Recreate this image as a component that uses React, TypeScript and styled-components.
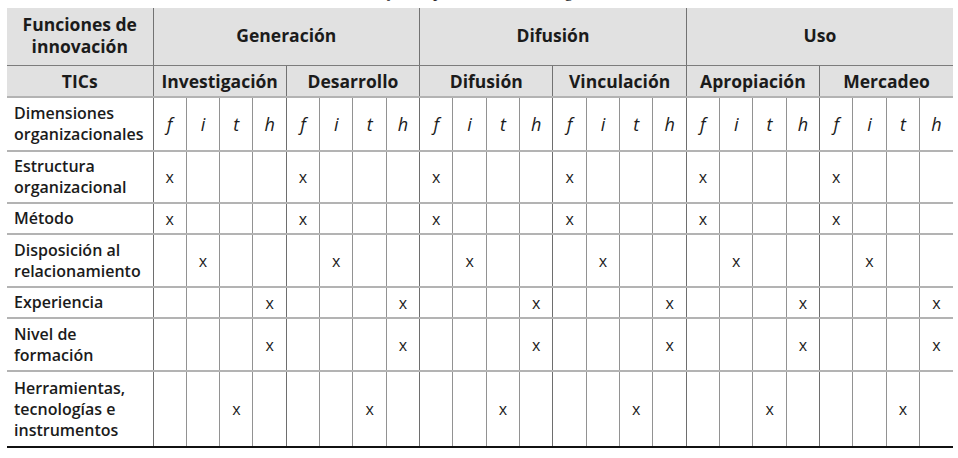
import React from 'react';
import styled, { createGlobalStyle } from 'styled-components';

const GlobalStyle = createGlobalStyle`
  html, body {
    margin: 0;
    padding: 0;
    background: #fff;
  }
  body {
    font-family: 'Open Sans', 'Liberation Sans', sans-serif;
    color: #1b1b1b;
    overflow: hidden;
  }
`;

const Page = styled.div`
  width: 958px;
  height: 458px;
  overflow: hidden;
  padding: 0 5px 0 7px;
  box-sizing: border-box;
`;

const Caption = styled.p`
  margin: -17px 0 8px;
  padding-left: 72px;
  font-family: 'Liberation Serif', serif;
  font-size: 17px;
  line-height: 17px;
  white-space: nowrap;
  color: #222;
`;

const Table = styled.table`
  width: 946px;
  border-collapse: collapse;
  table-layout: fixed;
`;

const Row = styled.tr<{ $h: number; $last?: boolean }>`
  height: ${(p) => p.$h}px;
  border-bottom: ${(p) => (p.$last ? '2px solid #111' : 'none')};
`;

const HeadCell = styled.th<{ $top?: boolean }>`
  background: #e1e1e1;
  font-size: 17.5px;
  font-weight: 700;
  line-height: ${(p) => (p.$top ? '22px' : '21px')};
  text-align: center;
  vertical-align: middle;
  padding: ${(p) => (p.$top ? '0 0 3px' : '2px 0 0')};
  border-left: 1px solid #727272;
  border-bottom: 1px solid #7c7c7c;
  white-space: nowrap;
  color: #1b1b1b;
  &:first-child {
    border-left: none;
  }
`;

const Label = styled.td`
  font-size: 16px;
  font-weight: 600;
  line-height: 21px;
  padding: 0 2px 0 7px;
  vertical-align: middle;
  border-top: 2px solid #b3b3b3;
  white-space: nowrap;
`;

const Mark = styled.td<{ $edge: boolean; $italic?: boolean }>`
  text-align: center;
  vertical-align: middle;
  padding: 0;
  border-top: 2px solid #b3b3b3;
  border-left: 1px solid ${(p) => (p.$edge ? '#6e6e6e' : '#929292')};
  font-size: ${(p) => (p.$italic ? '18px' : '16px')};
  font-style: ${(p) => (p.$italic ? 'italic' : 'normal')};
  font-weight: 500;
`;

const groups = [
  { name: 'Generación', subs: ['Investigación', 'Desarrollo'] },
  { name: 'Difusión', subs: ['Difusión', 'Vinculación'] },
  { name: 'Uso', subs: ['Apropiación', 'Mercadeo'] },
];

const letters = ['f', 'i', 't', 'h'];

const rows = [
  { label: ['Estructura', 'organizacional'], mark: 'f', h: 52 },
  { label: ['Método'], mark: 'f', h: 31 },
  { label: ['Disposición al', 'relacionamiento'], mark: 'i', h: 53 },
  { label: ['Experiencia'], mark: 'h', h: 31 },
  { label: ['Nivel de', 'formación'], mark: 'h', h: 53 },
  { label: ['Herramientas,', 'tecnologías e', 'instrumentos'], mark: 't', h: 76 },
];

const subCount = groups.reduce((n, g) => n + g.subs.length, 0);
const slots = Array.from({ length: subCount * 4 }, (_, i) => letters[i % 4]);

function Lines({ lines }: { lines: string[] }) {
  return (
    <>
      {lines.map((l, i) => (
        <React.Fragment key={i}>
          {i > 0 && <br />}
          {l}
        </React.Fragment>
      ))}
    </>
  );
}

export default function App() {
  return (
    <Page>
      <GlobalStyle />
      <Caption>
        Tabla 2. Funciones de innovación de las TIC y sus aplicaciones en la organización
      </Caption>
      <Table>
        <colgroup>
          <col style={{ width: 146 }} />
          {slots.map((_, i) => (
            <col key={i} />
          ))}
        </colgroup>
        <thead>
          <Row $h={57}>
            <HeadCell $top>
              <Lines lines={['Funciones de', 'innovación']} />
            </HeadCell>
            {groups.map((g) => (
              <HeadCell $top key={g.name} colSpan={g.subs.length * 4}>
                {g.name}
              </HeadCell>
            ))}
          </Row>
          <Row $h={32}>
            <HeadCell>TICs</HeadCell>
            {groups.flatMap((g) =>
              g.subs.map((s) => (
                <HeadCell key={g.name + s} colSpan={4}>
                  {s}
                </HeadCell>
              ))
            )}
          </Row>
        </thead>
        <tbody>
          <Row $h={54}>
            <Label>
              <Lines lines={['Dimensiones', 'organizacionales']} />
            </Label>
            {slots.map((l, i) => (
              <Mark key={i} $edge={i % 4 === 0} $italic>
                {l}
              </Mark>
            ))}
          </Row>
          {rows.map((r, ri) => (
            <Row key={ri} $h={r.h} $last={ri === rows.length - 1}>
              <Label>
                <Lines lines={r.label} />
              </Label>
              {slots.map((l, i) => (
                <Mark key={i} $edge={i % 4 === 0}>
                  {l === r.mark ? 'x' : ''}
                </Mark>
              ))}
            </Row>
          ))}
        </tbody>
      </Table>
    </Page>
  );
}
